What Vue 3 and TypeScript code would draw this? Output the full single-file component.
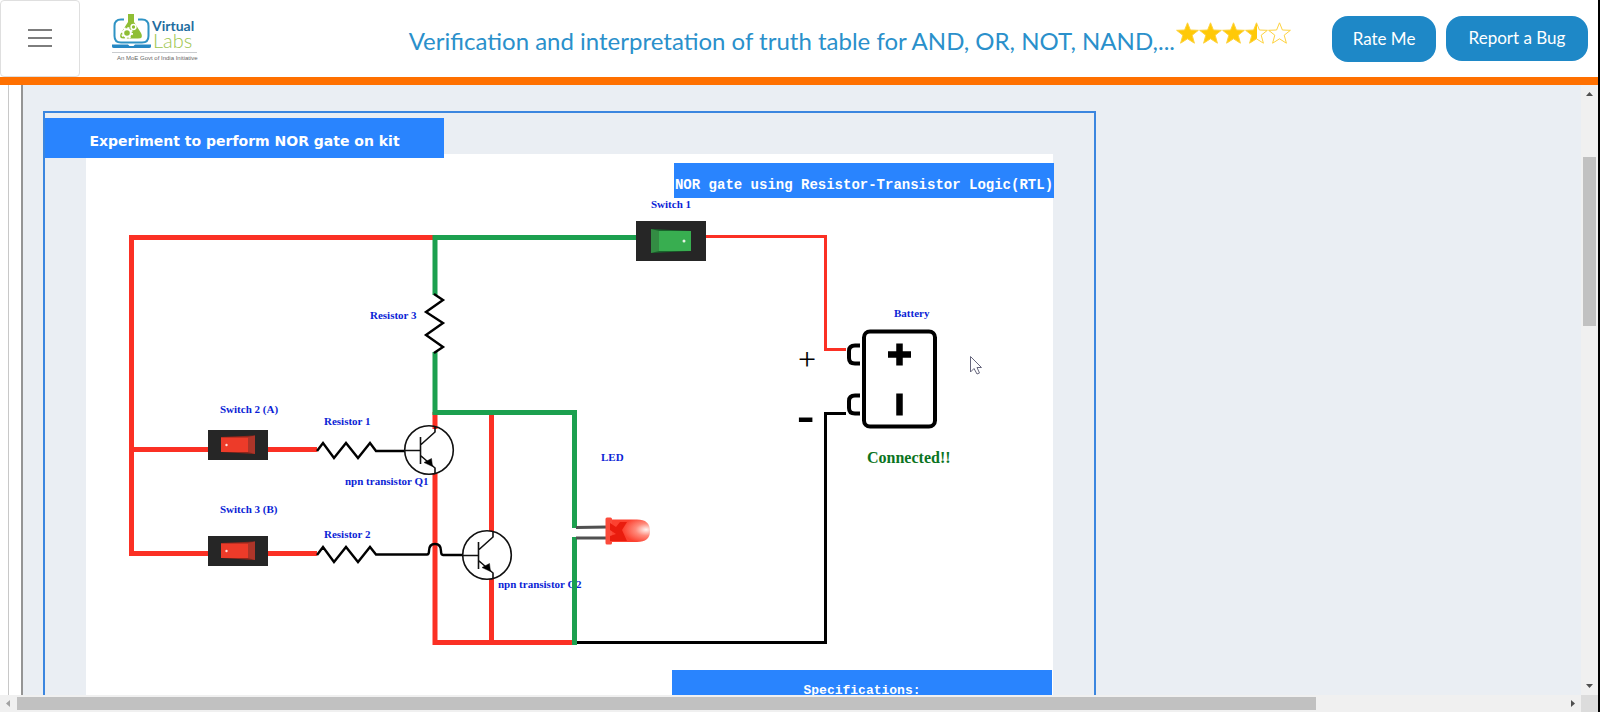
<script setup lang="ts">
import { ref } from 'vue'

interface Label {
  text: string
  x: number
  y: number
}

interface Toggle {
  name: string
  kind: 'main' | 'input'
  left: number
  top: number
}

const stars: number[] = [1, 1, 1, 0.5, 0]
const starPath = 'M11.5 .8 L14.4 8 L22.4 8.300 L16.2 13.2 L18.4 21.2 L11.500 16.800 L4.6 21.2 L6.8 13.2 L.6 8.300 L8.6 8 Z'

const labels: Label[] = [
  { text: 'Switch 1', x: 651, y: 208 },
  { text: 'Resistor 3', x: 370, y: 319 },
  { text: 'Battery', x: 894, y: 317 },
  { text: 'Switch 2 (A)', x: 220, y: 413 },
  { text: 'Resistor 1', x: 324, y: 425 },
  { text: 'npn transistor Q1', x: 345, y: 485 },
  { text: 'LED', x: 601, y: 461 },
  { text: 'Switch 3 (B)', x: 220, y: 513 },
  { text: 'Resistor 2', x: 324, y: 538 },
  { text: 'npn transistor Q2', x: 498, y: 588 },
]

const toggles: Toggle[] = [
  { name: 'Switch 1', kind: 'main', left: 550, top: 67 },
  { name: 'Switch 2 (A)', kind: 'input', left: 122, top: 276 },
  { name: 'Switch 3 (B)', kind: 'input', left: 122, top: 382 },
]

const transistors = [
  { x: 429, y: 450 },
  { x: 487, y: 555 },
]

const menuOpen = ref(false)
</script>

<template>
  <div class="page">
    <div class="app">
      <header class="topbar">
        <button class="menu" type="button" aria-label="Menu" :aria-expanded="menuOpen" @click="menuOpen = !menuOpen">
          <span></span><span></span><span></span>
        </button>
        <a class="logo" href="#" aria-label="Virtual Labs">
          <svg width="90" height="50" viewBox="110 12 90 50">
            <path d="M124 19.500 h-3 q-6.500 0 -6.500 6.500 v10 q0 6.500 6.500 6.500 h21 q6.500 0 6.500 -6.500 v-10 q0 -6.500 -6.500 -6.500 h-4" fill="none" stroke="#2f93c4" stroke-width="2" />
            <path d="M128 14 h6 v8 l7 11 q3 5.500 -3 5.500 h-14 q-6 0 -3 -5.500 l7 -11 z" fill="#8fbe35" />
            <circle cx="127" cy="33" r="3.800" fill="none" stroke="#fff" stroke-width="2" />
            <circle cx="127" cy="33" r="5" fill="none" stroke="#fff" stroke-width="2" stroke-dasharray="2 1.900" />
            <circle cx="133.500" cy="27" r="2.400" fill="none" stroke="#fff" stroke-width="1.500" />
            <path d="M112 44.500 h16 l1.500 1.500 h4 l1.500 -1.500 h16 v2 q0 1.500 -2 1.500 h-35 q-2 0 -2 -1.500 z" fill="#2688c4" />
            <text x="152" y="31" class="logo-virtual">Virtual</text>
            <text x="153" y="48" class="logo-labs">Labs</text>
            <path d="M112 52.500 h85" stroke="#c9cccf" />
            <text x="117" y="60" class="logo-tag">An MoE Govt of India Initiative</text>
          </svg>
        </a>
        <h1>Verification and interpretation of truth table for AND, OR, NOT, NAND,...</h1>
        <div class="rating" role="img" aria-label="Rated 3.5 of 5">
          <svg v-for="(fill, i) in stars" :key="i" width="23" height="22" viewBox="0 0 23 22">
            <defs>
              <linearGradient :id="'star' + i">
                <stop :offset="fill" stop-color="#ffc907" />
                <stop :offset="fill" stop-color="#fff" />
              </linearGradient>
            </defs>
            <path :d="starPath" :fill="`url(#star${i})`" stroke="#fdd23f" />
          </svg>
        </div>
        <nav class="actions">
          <button type="button" class="rate">Rate Me</button>
          <button type="button" class="report">Report a Bug</button>
        </nav>
      </header>

      <div class="body">
        <aside class="rail"></aside>
        <main class="workspace">
          <section class="panel">
            <h2>Experiment to perform NOR gate on kit</h2>
            <div class="board">
              <svg class="circuit" width="967" height="560" viewBox="86 154 967 560" aria-label="NOR gate circuit">
                <defs>
                  <radialGradient id="glow" cx="0.900" cy="0.450" r="0.600">
                    <stop offset="0" stop-color="#fff3f0" />
                    <stop offset="0.450" stop-color="#ff8a7b" />
                    <stop offset="1" stop-color="#fc4130" />
                  </radialGradient>
                </defs>
                <text v-for="l in labels" :key="l.text" :x="l.x" :y="l.y" class="label">{{ l.text }}</text>
                <g fill="none" stroke="#fb3024" stroke-width="5">
                  <path d="M433 237.500 H131.500 V553.500 H317 M131.500 449.500 H317" />
                  <path d="M435 412 V429 M435 473 V642.500 H574 M491.500 413 V531 M491.500 579 V642" />
                </g>
                <g fill="none" stroke="#1ca04f" stroke-width="5">
                  <path d="M636 237.500 H435 M435 235 V295 M435 352 V415" />
                  <path d="M435 412.500 H574.500 V528 M574.500 537 V645" />
                </g>
                <path d="M706 236.500 H825.500 V349.500 H846" fill="none" stroke="#fb3024" stroke-width="3" />
                <path d="M577 642.500 H825.500 V413.500 H846" fill="none" stroke="#000" stroke-width="3" />
                <g fill="none" stroke="#000" stroke-width="2.400">
                  <path d="M434 294 L443 300 L426 312 L443 323 L426 335 L443 347 L434 353" />
                  <path d="M317 451 L323 443 L334 458 L346 443 L358 458 L370 443 L376 451 H405" />
                  <path d="M317 555 L323 547 L334 562 L346 547 L358 562 L370 547 L376 554.500 H427 Q429 554.500 429 551 Q429 544 435 544 Q441 544 441 551 Q441 555 443 555 H463" />
                </g>
                <g v-for="t in transistors" :key="t.x" :transform="`translate(${t.x} ${t.y})`" fill="none" stroke="#111" stroke-width="1.600">
                  <circle r="24.300" />
                  <path d="M-24 .5 H-8.500 M-8.500 -13 V14 M-8.500 -5 L6 -18 V-24 M-8.500 5.500 L6 18 V24" />
                  <path d="M-5 12.500 L2.500 8.500 L3.500 16.500 Z" fill="#000" stroke-width="0.500" />
                </g>
                <path d="M576 527.500 L608 527 M576 538 H608" stroke="#505050" stroke-width="3" />
                <path d="M611 519.500 H637 Q650 519.500 650 531 Q650 542 637 542 H611 Z" fill="url(#glow)" />
                <rect x="605.500" y="517.500" width="6.500" height="27" rx="1.500" fill="#fb4b3b" />
                <path d="M610 523 L616 527 L620 522 H627 L622 530 L627 541 H610 V536 L616 534 L610 530 Z" fill="#e91c0e" />
                <g fill="none" stroke="#000" stroke-width="4">
                  <rect x="864" y="331.500" width="71" height="95" rx="6" />
                  <path d="M860 345.500 H855 Q849 345.500 849 351 V358 Q849 363.500 855 363.500 H860" />
                  <path d="M860 395.500 H855 Q849 395.500 849 401 V408 Q849 413.500 855 413.500 H860" />
                  <path d="M888 354.500 H911 M899.500 343.500 V365.500 M899.500 393.500 V415.500" stroke-width="6.500" />
                </g>
                <text x="798" y="370" class="pole">+</text>
                <text x="797" y="432" class="pole minus">-</text>
                <text x="867" y="463" class="status">Connected!!</text>
                <path d="M970.500 356.500 V372 L974 368.500 L977 374 L979.500 373 L977 367.500 H981.500 Z" fill="#fff" stroke="#66667c" />
              </svg>
              <h3 class="heading-top">NOR gate using Resistor-Transistor Logic(RTL)</h3>
              <button
                v-for="t in toggles"
                :key="t.name"
                type="button"
                :class="['toggle', t.kind]"
                :aria-label="t.name"
                :style="{ left: t.left + 'px', top: t.top + 'px' }"
              >
                <svg v-if="t.kind === 'main'" width="70" height="40" viewBox="0 0 70 40">
                  <path d="M15 8 L55 10 V30 L15 32 Z" fill="#19652c" />
                  <path d="M15 8 L23 10 V30 L15 32 Z" fill="#338c43" />
                  <rect x="23" y="10" width="32" height="20" fill="#38ae50" />
                  <circle cx="48" cy="20" r="1.500" fill="#e6f3e5" />
                </svg>
                <svg v-else width="60" height="30" viewBox="0 0 60 30">
                  <path d="M13 7 L47 5.500 V24 L13 22 Z" fill="#8f271c" />
                  <path d="M40 7 L47 5.500 V24 L40 22 Z" fill="#ad3529" />
                  <rect x="13" y="7.500" width="27" height="14.500" fill="#ed3b29" />
                  <circle cx="18.500" cy="15" r="1.200" fill="#ffe2dc" />
                </svg>
              </button>
              <h3 class="heading-spec">Specifications:</h3>
            </div>
          </section>
        </main>
        <div class="vscroll" aria-hidden="true">
          <svg width="17" height="17" viewBox="0 0 17 17"><path d="M5 11 L8.500 7 L12 11 Z" fill="#505050" /></svg>
          <div class="vtrack"><div class="vthumb"></div></div>
          <svg width="17" height="17" viewBox="0 0 17 17"><path d="M5 6 L8.500 10 L12 6 Z" fill="#505050" /></svg>
        </div>
      </div>

      <footer class="hscroll" aria-hidden="true">
        <svg width="17" height="17" viewBox="0 0 17 17"><path d="M10 5 L6 8.500 L10 12 Z" fill="#a3a3a3" /></svg>
        <div class="htrack"><div class="hthumb"></div></div>
        <svg width="17" height="17" viewBox="0 0 17 17"><path d="M7 5 L11 8.500 L7 12 Z" fill="#505050" /></svg>
        <div class="corner"></div>
      </footer>
    </div>
  </div>
</template>

<style>
body {
  overflow: hidden;
}
</style>

<style scoped>
* {
  box-sizing: border-box;
}
h1,
h2,
h3 {
  margin: 0;
}
svg {
  display: block;
  flex: none;
}
.page {
  height: 100vh;
  padding-right: 2px;
  background: #000;
}
.app {
  height: 100%;
  display: flex;
  flex-direction: column;
  background: #fff;
}
.topbar {
  flex: none;
  display: flex;
  height: 85px;
  border-bottom: 8px solid #ff7000;
  font-family: Lato, "Open Sans", sans-serif;
}
.menu {
  flex: none;
  width: 80px;
  padding: 0 27px 2px;
  border: 1px solid #dfdfdf;
  border-radius: 4px;
  background: #fff;
  display: flex;
  flex-direction: column;
  justify-content: center;
  gap: 6px;
}
.menu span {
  height: 2px;
  background: #7d7d7d;
}
.logo {
  margin: 12px 0 0 30px;
}
.logo-virtual {
  font: 700 14px Lato, sans-serif;
  fill: #1f6d9f;
}
.logo-labs {
  font: 300 20px Lato, sans-serif;
  fill: #9cc54c;
}
.logo-tag {
  font: 400 6px "Liberation Sans", sans-serif;
  fill: #666;
}
h1 {
  flex: 1 1 0;
  min-width: 0;
  padding-top: 23px;
  font-size: 24px;
  line-height: 36px;
  font-weight: 400;
  color: #2a90cb;
  text-align: right;
  white-space: nowrap;
}
.rating {
  flex: none;
  display: flex;
  padding: 22px 41px 0 1px;
}
.actions {
  flex: none;
  display: flex;
  align-items: flex-start;
  gap: 10px;
  padding: 16px 10px 0 0;
}
.actions button {
  height: 46px;
  padding: 0 0 2px;
  border: 0;
  border-radius: 16px;
  background: #1e88c7;
  color: #fff;
  font: 400 17px Lato, sans-serif;
}
.actions .rate {
  width: 104px;
}
.actions .report {
  width: 142px;
  height: 45px;
}
.body {
  flex: 1;
  min-height: 0;
  display: flex;
}
.rail {
  flex: none;
  width: 23px;
  border-right: 2px solid #949494;
  background: linear-gradient(#c8c8c8, #c8c8c8) 8px 0 / 1px 100% no-repeat #fff;
}
.workspace {
  flex: 1;
  min-width: 0;
  overflow: hidden;
  display: flex;
  align-items: flex-start;
  padding: 26px 20px 0;
  background: #eaeef3;
}
.panel {
  flex: 0 1 1053px;
  padding-top: 5px;
  border: 2px solid #3b86df;
}
h2 {
  position: relative;
  z-index: 1;
  width: 399px;
  margin-bottom: -4px;
  background: #2984fe;
  color: #fff;
  font: 700 14px/40px "DejaVu Sans", sans-serif;
  padding-top: 3px;
  height: 40px;
  text-align: center;
  white-space: nowrap;
}
.board {
  position: relative;
  margin: 0 41px;
  background: #fff;
}
.heading-top,
.heading-spec {
  position: absolute;
  width: 380px;
  height: 35px;
  background: #2984fe;
  color: #fff;
  font-family: "Liberation Mono", monospace;
  white-space: nowrap;
  text-align: center;
}
.heading-top {
  left: 588px;
  top: 9px;
  font-size: 14px;
  line-height: 44px;
}
.heading-spec {
  left: 586px;
  top: 516px;
  font-size: 13px;
  line-height: 41px;
}
.toggle {
  position: absolute;
  padding: 0;
  border: 0;
  background: #262626;
}
.label {
  font: 700 11px "Liberation Serif", serif;
  fill: #0c1fd6;
}
.status {
  font: 700 16px "Liberation Serif", serif;
  fill: #0b7422;
}
.pole {
  font: 400 32px "Liberation Serif", serif;
  fill: #000;
}
.minus {
  font-size: 52px;
  font-weight: 700;
}
.vscroll {
  flex: none;
  width: 17px;
  display: flex;
  flex-direction: column;
  background: #f0f0f0;
}
.vtrack {
  flex: 1;
  padding: 55px 2px 0;
}
.vthumb {
  height: 169px;
  background: #c1c1c1;
}
.hscroll {
  flex: none;
  height: 17px;
  display: flex;
  background: #f0f0f0;
}
.htrack {
  flex: 1;
  padding: 2px 0;
}
.hthumb {
  width: 84%;
  height: 13px;
  background: #c1c1c1;
}
.corner {
  width: 17px;
  background: #dcdcdc;
}
</style>
